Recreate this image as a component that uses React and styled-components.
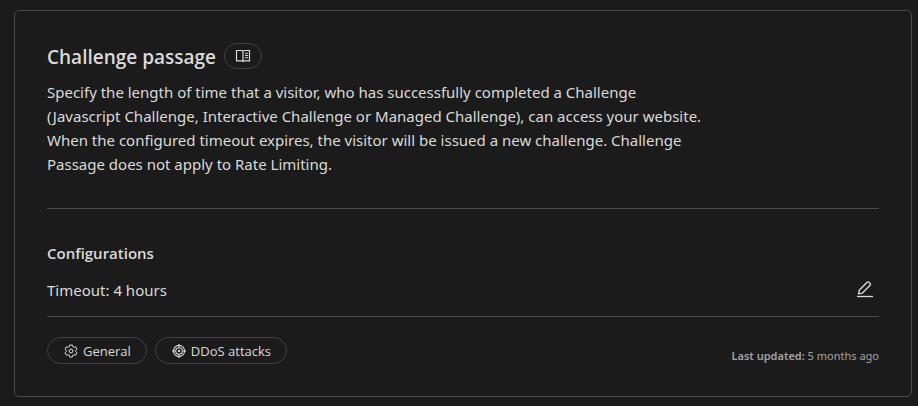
import React from "react";
import styled, { createGlobalStyle } from "styled-components";

const GlobalStyle = createGlobalStyle`
  *, *::before, *::after { box-sizing: border-box; }
  body {
    margin: 0;
    background: #1b1b1b;
    color: #dadada;
    font-family: "Segoe UI", "Noto Sans", "Open Sans", sans-serif;
    font-size: 15px;
    line-height: 24px;
  }
  h2, h3, p, ul { margin: 0; padding: 0; }
`;

const Page = styled.main`
  padding: 10px 6px 8px 14px;
`;

const Card = styled.section`
  border: 1px solid #4a4a4a;
  border-radius: 5px;
  padding: 32px;
`;

const Header = styled.header`
  display: flex;
  align-items: flex-start;
  gap: 8px;
  height: 28px;
`;

const Title = styled.h2`
  font-family: "Segoe UI", "Open Sans", sans-serif;
  font-size: 19px;
  font-weight: 600;
  line-height: 28px;
`;

const DocsLink = styled.a`
  display: inline-flex;
  align-items: center;
  justify-content: center;
  width: 38px;
  height: 26px;
  border: 1px solid #424242;
  border-radius: 13px;
  color: #dadada;
`;

const Description = styled.p`
  max-width: 80%;
  margin-top: 9px;
`;

const Divider = styled.hr`
  height: 1px;
  margin: ${({ $top }) => $top}px 0 0;
  border: 0;
  background: #4a4a4a;
`;

const SectionTitle = styled.h3`
  margin-top: 32px;
  font-family: "Segoe UI", "Open Sans", sans-serif;
  font-size: 15px;
  font-weight: 600;
  line-height: 24px;
`;

const SettingRow = styled.div`
  display: flex;
  align-items: center;
  justify-content: space-between;
  margin-top: 13px;
  height: 24px;
`;

const EditButton = styled.button`
  display: inline-flex;
  padding: 4px 5px 6px;
  border: 0;
  background: none;
  color: #dadada;
  cursor: pointer;
`;

const Footer = styled.footer`
  display: flex;
  align-items: flex-end;
  justify-content: space-between;
  margin-top: 20px;
`;

const Tags = styled.ul`
  display: flex;
  gap: 8px;
  list-style: none;
`;

const Tag = styled.li`
  display: inline-flex;
  align-items: center;
  gap: 5px;
  height: 27px;
  padding: 0 15px 0 16px;
  border: 1px solid #424242;
  border-radius: 14px;
  font-family: "Segoe UI", "Open Sans", sans-serif;
  font-size: 13px;
  line-height: 20px;
`;

const Updated = styled.p`
  color: #a3a3a3;
  font-size: 11px;
  line-height: 16px;

  strong { font-weight: 600; }
`;

const Icon = styled.svg.attrs({ fill: "none", stroke: "currentColor", "aria-hidden": true })`
  display: block;
  flex: none;
`;

const BookIcon = () => (
  <Icon width="16" height="16" viewBox="0 0 16 16">
    <path d="M8 3.3 6.8 2.5H1.5v10.3h5.3L8 13.6l1.2-.8h5.3V2.5H9.2L8 3.3v10.3" strokeWidth="1.2" />
    <path d="M10 5.2h3M10 7.5h3M10 9.8h3" strokeWidth="1.1" />
  </Icon>
);

const PencilIcon = () => (
  <Icon width="18" height="18" viewBox="0 0 18 18" strokeWidth="1.3">
    <path d="m3.2 10.2 7.9-7.9a1.3 1.3 0 0 1 1.8 0l1.2 1.2a1.3 1.3 0 0 1 0 1.8l-7.9 7.9-3.7.7.7-3.7Z" strokeLinejoin="round" />
    <path d="M1 16.5h16" />
  </Icon>
);

const GearIcon = () => (
  <Icon width="14" height="14" viewBox="0 0 14 14" strokeLinejoin="round">
    <path d="M5.6 1h2.8l.4 1.7 1.1.6 1.7-.5L13 5.2l-1.3 1.2v1.2L13 8.8l-1.4 2.4-1.7-.5-1.1.6L8.4 13H5.6l-.4-1.7-1.1-.6-1.7.5L1 8.8l1.3-1.2V6.4L1 5.2l1.4-2.4 1.7.5 1.1-.6L5.6 1Z" />
    <circle cx="7" cy="7" r="1.9" />
  </Icon>
);

const TargetIcon = () => (
  <Icon width="14" height="14" viewBox="0 0 14 14" strokeWidth="1.1">
    <circle cx="7" cy="7" r="5.6" />
    <circle cx="7" cy="7" r="3.3" />
    <circle cx="7" cy="7" r="1.2" fill="currentColor" stroke="none" />
    <path d="M7 0v3.5M7 10.5V14M0 7h3.5M10.5 7H14" />
  </Icon>
);

const TAGS = [
  { label: "General", Glyph: GearIcon },
  { label: "DDoS attacks", Glyph: TargetIcon },
];

export default function App() {
  return (
    <>
      <GlobalStyle />
      <Page>
        <Card aria-labelledby="challenge-title">
          <Header>
            <Title id="challenge-title">Challenge passage</Title>
            <DocsLink href="#docs" aria-label="Challenge passage documentation">
              <BookIcon />
            </DocsLink>
          </Header>
          <Description>
            Specify the length of time that a visitor, who has successfully completed a Challenge
            (Javascript Challenge, Interactive Challenge or Managed Challenge), can access your
            website. When the configured timeout expires, the visitor will be issued a new
            challenge. Challenge Passage does not apply to Rate Limiting.
          </Description>
          <Divider $top={32} />
          <SectionTitle>Configurations</SectionTitle>
          <SettingRow>
            <span>Timeout: 4 hours</span>
            <EditButton type="button" aria-label="Edit timeout">
              <PencilIcon />
            </EditButton>
          </SettingRow>
          <Divider $top={14} />
          <Footer>
            <Tags>
              {TAGS.map(({ label, Glyph }) => (
                <Tag key={label}>
                  <Glyph />
                  {label}
                </Tag>
              ))}
            </Tags>
            <Updated>
              <strong>Last updated:</strong> 5 months ago
            </Updated>
          </Footer>
        </Card>
      </Page>
    </>
  );
}
